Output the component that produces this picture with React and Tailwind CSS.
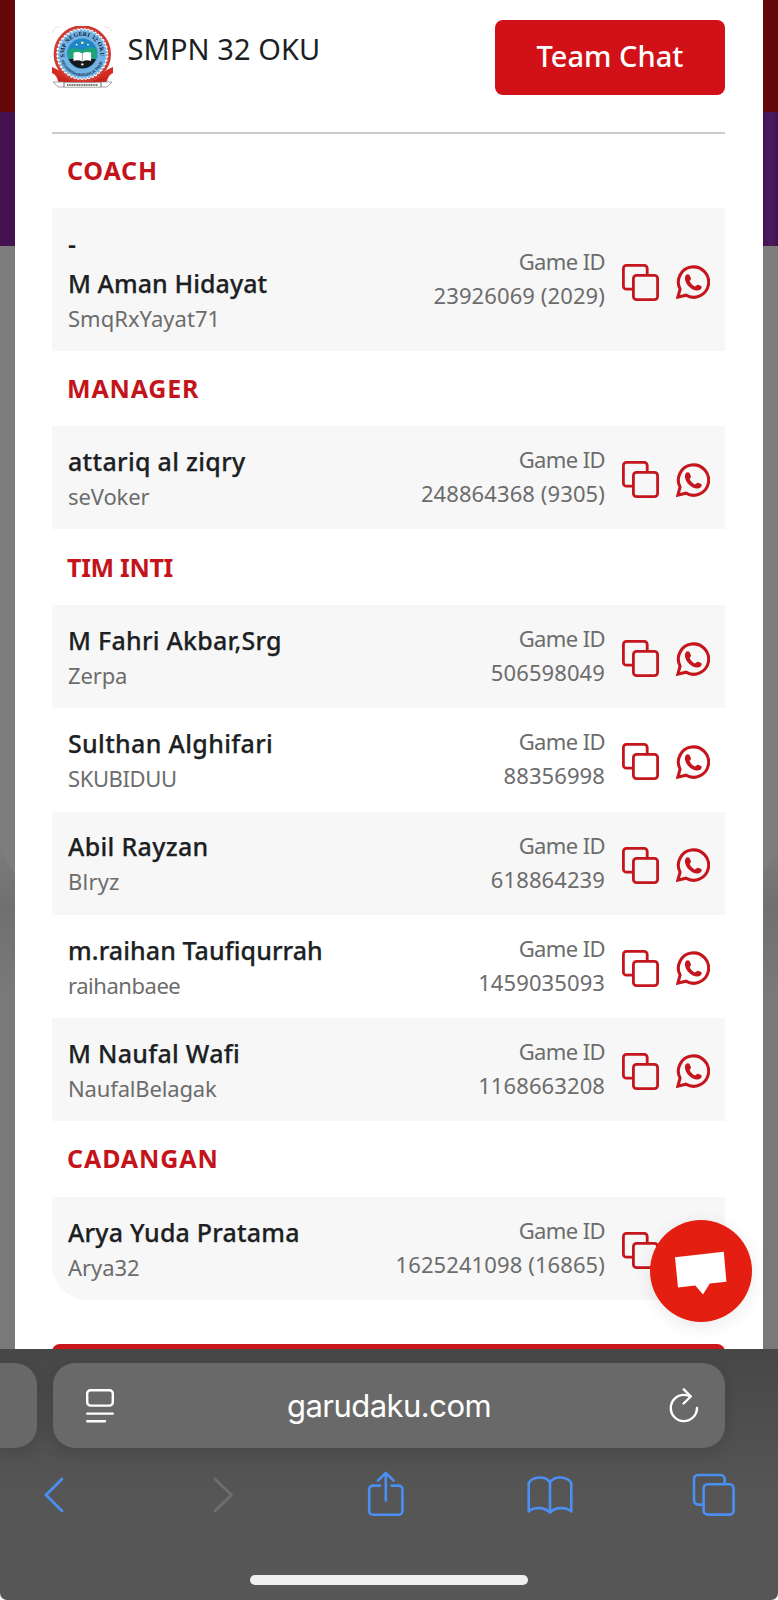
const SECTIONS = [
  {
    title: 'COACH',
    titleClass: 'h-[74.4px] tracking-[0.8px]',
    players: [
      { prefix: '-', name: 'M Aman Hidayat', nameClass: 'tracking-[0.06px]', nick: 'SmqRxYayat71', nickClass: 'tracking-[0.02px]', id: '23926069 (2029)' },
    ],
  },
  {
    title: 'MANAGER',
    titleClass: 'h-[75.7px] tracking-[0.82px]',
    players: [
      { name: 'attariq al ziqry', nameClass: 'tracking-[0.31px]', nick: 'seVoker', nickClass: 'tracking-[-0.11px]', id: '248864368 (9305)' },
    ],
  },
  {
    title: 'TIM INTI',
    titleClass: 'h-[75.7px] tracking-[-0.3px]',
    players: [
      { name: 'M Fahri Akbar,Srg', nameClass: 'tracking-[0.25px]', nick: 'Zerpa', nickClass: 'tracking-[-0.15px]', id: '506598049' },
      { name: 'Sulthan Alghifari', nameClass: 'tracking-[0.33px]', nick: 'SKUBIDUU', nickClass: 'tracking-[-0.4px]', id: '88356998' },
      { name: 'Abil Rayzan', nameClass: 'tracking-[0.31px]', nick: 'Blryz', nickClass: 'tracking-[0.2px]', id: '618864239' },
      { name: 'm.raihan Taufiqurrah', nameClass: 'tracking-[0.08px]', nick: 'raihanbaee', nickClass: 'tracking-[-0.46px]', id: '1459035093' },
      { name: 'M Naufal Wafi', nameClass: 'tracking-[0.28px]', nick: 'NaufalBelagak', nickClass: 'tracking-[-0.15px]', id: '1168663208' },
    ],
  },
  {
    title: 'CADANGAN',
    titleClass: 'h-[75.7px] tracking-[0.9px]',
    last: true,
    players: [
      { name: 'Arya Yuda Pratama', nameClass: 'tracking-[0.2px]', nick: 'Arya32', nickClass: 'tracking-[-0.06px]', id: '1625241098 (16865)' },
    ],
  },
];

function SchoolLogo() {
  return (
    <svg className="h-[62px] w-[61px]" viewBox="0 0 61 62">
      <defs>
        <clipPath id="emblem">
          <circle cx="30.3" cy="27.6" r="14.6" />
        </clipPath>
        <path id="arcTop" d="M13.4 34 A18 18 0 1 1 47.2 34" />
        <path id="arcBottom" d="M8.7 32 A21.9 21.9 0 0 0 51.9 32" />
      </defs>
      <path d="M0.5 6 A9 9 0 0 1 8 0.8 M52.5 0.8 A9 9 0 0 1 60.3 6" fill="none" stroke="#d9d9d9" strokeWidth="0.8" />
      <path d="M0 41 Q10 45 17 53 L28 57 L6 55.5 Q5 49 0 47Z M61 41 Q51 45 44 53 L33 57 L55 55.5 Q56 49 61 47Z" fill="#d32a22" />
      <path d="M5 50 Q30 60 56 50 L54 55.8 H7Z" fill="#c8241e" />
      <circle cx="30.3" cy="28" r="27.4" fill="#fff" stroke="#cf3a30" strokeWidth="2.6" />
      <circle cx="30.3" cy="28" r="26" fill="none" stroke="#d0443a" strokeWidth="1.6" strokeDasharray="2 1.8" />
      <circle cx="30.3" cy="28" r="23.6" fill="#74b4e4" stroke="#74b4e4" strokeWidth="2.4" strokeDasharray="2.4 1.2" />
      <circle cx="30.3" cy="27.6" r="15.4" fill="#3f8fc8" />
      <g clipPath="url(#emblem)">
        <rect x="14" y="12" width="33" height="33" fill="#1c86c6" />
        <path d="M14 24 L22 22 L30 24 L39 21 L47 24 V36 H14Z" fill="#1fa37c" />
        <path d="M14 33 H47 V45 H14Z" fill="#15191c" />
      </g>
      <path d="M21.5 26.8 Q26 25 30.3 27.4 Q34.6 25 39.1 26.8 V35 Q34.6 33.4 30.3 35.6 Q26 33.4 21.5 35Z" fill="#fff" />
      <path d="M30.3 27.5 V35.5" stroke="#5a6a70" strokeWidth="0.6" />
      <circle cx="24.6" cy="18.6" r="0.9" fill="#fff" />
      <circle cx="30.3" cy="16.8" r="1.3" fill="#f8f3a0" />
      <circle cx="36" cy="18.6" r="0.9" fill="#fff" />
      <path d="M29 37.5 h2.6 v1.8 h-2.6z" fill="#e8e8e8" />
      <text className="fill-[#10203a] font-['Liberation_Serif',serif] text-[6px] font-bold">
        <textPath href="#arcTop" startOffset="3" textLength="62">SMP NEGERI 32 OKU</textPath>
      </text>
      <text className="fill-[#1d3f66] font-['Liberation_Sans',sans-serif] text-[4px] font-bold">
        <textPath href="#arcBottom" startOffset="3" textLength="54">KECAMATAN BATURAJA TIMUR</textPath>
      </text>
      <path d="M1 56 H12 V61 H6 Z M60 56 H49 V61 H55 Z M12 56.6 H49 V61.2 H12Z" fill="#fff" stroke="#6b6b6b" strokeWidth="0.6" />
      <path d="M15 59 H46" stroke="#4c4c4c" strokeWidth="1.5" strokeDasharray="1.2 0.5" />
    </svg>
  );
}

function CopyIcon() {
  return (
    <svg className="h-[37px] w-[37px]" viewBox="0 0 37 37" fill="none" stroke="#c4161c" strokeWidth="2.8">
      <path d="M11 25.2 H4.4 A3 3 0 0 1 1.4 22.2 V4.4 A3 3 0 0 1 4.4 1.4 H22.2 A3 3 0 0 1 25.2 4.4 V11" />
      <rect x="11.4" y="11.4" width="24.2" height="24.2" rx="3.2" />
    </svg>
  );
}

function WhatsappIcon() {
  return (
    <svg className="h-[34px] w-[34px]" viewBox="0 0 100 100">
      <path d="M5.5 94.5 L12 71 A44.6 44.6 0 1 1 29 88.8 Z" fill="none" stroke="#c4161c" strokeWidth="9" />
      <path
        d="M30 29 C33 26 38 26 40 30 L44 39 C45 42 41 45 40 47 C44 56 50 61 56 63 C59 61 62 57 65 58 L74 62 C77 64 75 70 72 72 C66 77 57 75 48 71 C37 65 29 55 27 45 C25 38 27 32 30 29Z"
        fill="#c4161c"
      />
    </svg>
  );
}

function PlayerRow({ player, shaded, rounded }) {
  return (
    <div
      className={`flex ${player.prefix ? 'h-[142.2px]' : 'h-[103.2px]'} ${shaded ? 'bg-[#f7f7f7]' : 'bg-white'} ${rounded ? 'rounded-b-[36px]' : ''} pr-[15px] pl-[16px]`}
    >
      <div className="flex flex-1 flex-col pt-[17.8px] leading-[35px]">
        {player.prefix && <span className="mb-[4.6px] text-[25px] font-semibold text-[#1c1f23]">{player.prefix}</span>}
        <span className={`text-[25px] font-medium whitespace-nowrap text-[#1c1f23] [-webkit-text-stroke:0.25px_#1c1f23] ${player.nameClass}`}>{player.name}</span>
        <span className={`text-[22px] text-[#6c6c6c] ${player.nickClass}`}>{player.nick}</span>
      </div>
      <div className="flex flex-col items-end justify-center pb-[3px] text-[22px] leading-[34px] text-[#6c6c6c]">
        <span className="tracking-[-0.6px]">Game ID</span>
        <span className="tracking-[0.1px]">{player.id}</span>
      </div>
      <div className={`flex items-center gap-[17px] pl-[17px] ${player.prefix ? 'pt-[5.5px]' : 'pt-[4px]'}`}>
        <CopyIcon />
        <WhatsappIcon />
      </div>
    </div>
  );
}

function Modal() {
  return (
    <main className="h-[1349px] w-[748px] overflow-hidden bg-white pr-[38px] pl-[37px]">
      <header className="flex h-[132px] items-start pt-[20px]">
        <div className="mt-[6px]">
          <SchoolLogo />
        </div>
        <h1 className="ml-[14.5px] flex-1 pt-[9.5px] text-[29px] leading-[38px] tracking-[0.08px] text-[#1c1f23]">SMPN 32 OKU</h1>
        <button className="h-[75px] w-[230px] rounded-[8px] bg-[#d11117] pb-[3px] text-[29px] font-medium text-white">Team Chat</button>
      </header>
      <div className="h-[2px] bg-[#cbcbcb]" />
      {SECTIONS.map((s) => (
        <section key={s.title}>
          <h2 className={`flex items-center pl-[15px] text-[25px] font-bold text-[#c4141b] ${s.titleClass}`}>{s.title}</h2>
          {s.players.map((p, i) => (
            <PlayerRow key={p.name} player={p} shaded={i % 2 === 0} rounded={s.last} />
          ))}
        </section>
      ))}
      <div className="mt-[44.5px] h-[75px] rounded-[8px] bg-[#c8161c]" />
    </main>
  );
}

function BrowserBar() {
  return (
    <footer className="h-[251px] overflow-hidden rounded-b-[7px] bg-linear-to-b from-[#474747] to-[#565656] to-60% pt-[14px]">
      <div className="flex h-[85px]">
        <div className="w-[37px] rounded-r-[22px] bg-[#686868] shadow-[0_4px_16px_rgba(0,0,0,0.14)]" />
        <div className="ml-[16px] flex w-[672px] items-center rounded-[22px] bg-[#696969] shadow-[0_4px_16px_rgba(0,0,0,0.14)]">
          <svg className="ml-[32px] h-[36px] w-[30px]" viewBox="0 0 30 36" fill="none" stroke="#fff" strokeWidth="2.4" strokeLinecap="round">
            <rect x="2.2" y="2.2" width="25.6" height="15.4" rx="3.4" />
            <path d="M2.2 25.6 H27.8 M2.2 33.2 H20" />
          </svg>
          <span className="flex-1 pr-[6px] text-center font-['Inter',sans-serif] text-[31px] leading-[40px] tracking-[-0.53px] text-white">garudaku.com</span>
          <svg className="mr-[26px] h-[36px] w-[30px]" viewBox="0 0 30 36" fill="none" stroke="#fff" strokeWidth="2.4" strokeLinecap="round" strokeLinejoin="round">
            <path d="M28 20 A13.1 13.1 0 1 1 15 6.9 C17.5 6.9 19 7.5 21.2 8.4" />
            <path d="M14.8 1.4 L21.8 8.5 L14.6 15.5" />
          </svg>
        </div>
      </div>
      <nav className="mt-[22.5px] flex h-[48px] items-center" aria-label="Browser toolbar">
        <svg className="ml-[44px] h-[36px] w-[20px]" viewBox="0 0 20 36" fill="none" stroke="#4b8ff2" strokeWidth="2.8" strokeLinecap="round" strokeLinejoin="round">
          <path d="M18 2 L2 18 L18 34" />
        </svg>
        <svg className="ml-[149px] h-[36px] w-[20px]" viewBox="0 0 20 36" fill="none" stroke="#6f6f6f" strokeWidth="2.6" strokeLinecap="round" strokeLinejoin="round">
          <path d="M2 2 L18.4 18 L2 34" />
        </svg>
        <svg className="mb-[2px] ml-[133.5px] h-[46px] w-[37px]" viewBox="0 0 37 46" fill="none" stroke="#4b8ff2" strokeWidth="2.6" strokeLinecap="round" strokeLinejoin="round">
          <path d="M13 14.6 H6 A3.8 3.8 0 0 0 2.2 18.4 V40 A3.8 3.8 0 0 0 6 43.8 H31.6 A3.8 3.8 0 0 0 35.4 40 V18.4 A3.8 3.8 0 0 0 31.6 14.6 H24.6" />
          <path d="M18.8 29.5 V2 M11 9.6 L18.8 1.8 L26.6 9.6" />
        </svg>
        <svg className="ml-[123px] h-[40px] w-[46px]" viewBox="0 0 46 40" fill="none" stroke="#4b8ff2" strokeWidth="2.6" strokeLinejoin="round">
          <path d="M23 37.6 C18.5 32 7.5 31.6 1.7 36.4 V8 C6 1 18.5 0.6 23 7.4 C27.5 0.6 40 1 44.3 8 V36.4 C38.5 31.6 27.5 32 23 37.6 Z M23 7.4 V37.6" />
        </svg>
        <svg className="ml-[119.5px] h-[43px] w-[43px]" viewBox="0 0 43 43" fill="none" stroke="#4b8ff2" strokeWidth="2.6">
          <path d="M10.5 31.6 H6 A4 4 0 0 1 2 27.6 V6 A4 4 0 0 1 6 2 H28.6 A4 4 0 0 1 32.6 6 V10.5" />
          <rect x="11.6" y="11.2" width="30" height="30.4" rx="4" />
        </svg>
      </nav>
      <div className="mt-[56.5px] ml-[250px] h-[10px] w-[278px] rounded-full bg-[#eeeeee]" />
    </footer>
  );
}

function Backdrop({ side }) {
  const left = side === 'left';
  return (
    <div className="flex w-[15px] flex-col overflow-hidden bg-[#777777]">
      <div className="h-[112px] bg-[#640708]" />
      <div className={`h-[134px] ${left ? 'bg-[#43124f]' : 'bg-linear-to-r from-[#43124f] via-[#4b1b60] to-[#43124f]'}`} />
      <div className="h-[660px] bg-linear-to-b from-[#7d7d7d] from-90% to-[#707070]">
        <div className={`h-[639px] bg-[#7d7d7d] ${left ? 'w-[200px] rounded-bl-[47px]' : '-ml-[185px] w-[200px] rounded-br-[47px]'}`} />
      </div>
      <div className="flex-1 bg-linear-to-b from-[#707070] to-[#797979] to-20%" />
    </div>
  );
}

export default function App() {
  return (
    <div className="relative h-[1600px] w-[778px] overflow-hidden bg-white font-['Noto_Sans',sans-serif]">
      <div className="flex h-[1349px]">
        <Backdrop side="left" />
        <Modal />
        <Backdrop side="right" />
      </div>
      <BrowserBar />
      <button
        aria-label="Open chat"
        className="absolute top-[1220px] left-[650px] h-[102px] w-[102px] rounded-full bg-[#e41e10] shadow-[0_4px_18px_rgba(0,0,0,0.09)]"
      >
        <svg className="h-[102px] w-[102px]" viewBox="0 0 102 102">
          <path d="M25 37.3 L73.8 31.8 L76.4 61.8 L59.8 63.4 L53 74.4 L45.3 65.4 L28 67.4 Z" fill="#fff" />
        </svg>
      </button>
    </div>
  );
}
